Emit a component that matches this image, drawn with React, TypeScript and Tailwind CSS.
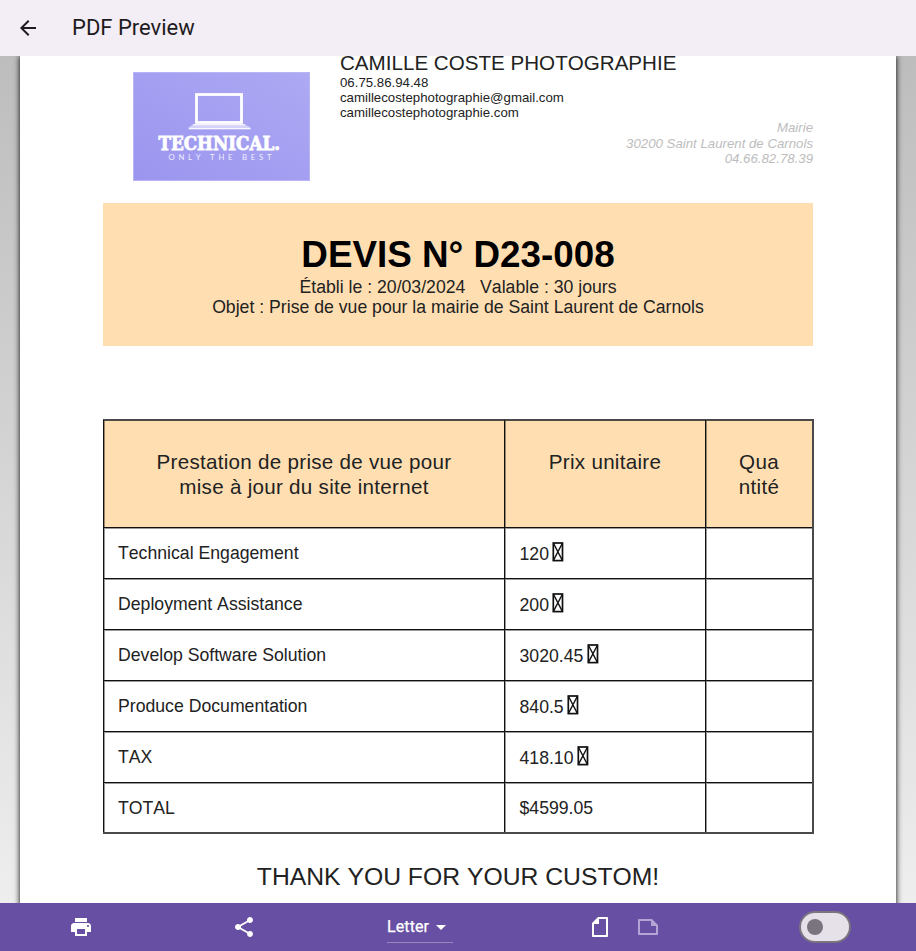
import React from 'react';
import { MdArrowBack, MdArrowDropDown, MdPrint, MdShare } from 'react-icons/md';

const rows = [
  { label: 'Technical Engagement', price: '120', missing: true, h: 'h-[51px]' },
  { label: 'Deployment Assistance', price: '200', missing: true, h: 'h-[51px]' },
  { label: 'Develop Software Solution', price: '3020.45', missing: true, h: 'h-[51px]' },
  { label: 'Produce Documentation', price: '840.5', missing: true, h: 'h-[51px]' },
  { label: 'TAX', price: '418.10', missing: true, h: 'h-[51px]' },
  { label: 'TOTAL', price: '$4599.05', missing: false, h: 'h-[50px]' },
];

const columns = 'grid grid-cols-[401px_201px_107px]';
const cell = 'border-l border-t border-[#111] shadow-[inset_1px_1px_0_rgba(0,0,0,0.4)]';
const headCell = 'border-l border-l-[#111] border-t-2 border-t-[#4a4a48] pt-[28px] shadow-[inset_1px_0_0_rgba(0,0,0,0.4)]';

function MissingGlyph() {
  return (
    <svg className="ml-[3.5px] -mt-[3px] shrink-0" width="12" height="20" viewBox="0 0 12 20" fill="none" stroke="#111">
      <rect x="1.3" y="1" width="9.2" height="17.6" strokeWidth="1.7" />
      <path d="M1.3 1l9.2 17.6M10.5 1L1.3 18.6" strokeWidth="1.4" />
    </svg>
  );
}

function NoteIcon({ className }: { className: string }) {
  return (
    <svg className={className} width="24" height="24" viewBox="0 0 24 24" fill="currentColor">
      <path d="M16 4H3c-.6 0-1 .4-1 1v14c0 .6.4 1 1 1h18c.6 0 1-.4 1-1v-9l-6-6zM4 18V6h11v5h5v7H4z" />
    </svg>
  );
}

function Logo() {
  return (
    <div className="h-[109px] w-[177px] bg-linear-to-tr from-[#9b95ef] to-[#ada9f3] outline-1 -outline-offset-1 outline-[#b8b4f5]">
      <svg width="177" height="109" viewBox="0 0 177 109">
        <rect x="63.5" y="22.5" width="45" height="28" fill="none" stroke="#fff" strokeWidth="2.8" />
        <path d="M60 52.5h52l5.5 3v1.8h-62v-1.8z" fill="#d5d2fa" />
        <path d="M60 52.7h52M56 56.7h61.5" stroke="#fff" strokeWidth="1" />
        <text x="25.5" y="78.2" textLength="121.5" lengthAdjust="spacingAndGlyphs" fill="#fff" stroke="#fff" strokeWidth="0.8" fontSize="17.8" fontWeight="700" fontFamily="'DejaVu Serif', serif">TECHNICAL.</text>
        <text x="35.5" y="88.2" textLength="103" fill="#f0effd" fontSize="7.8" fontFamily="Lato, sans-serif">ONLY THE BEST</text>
      </svg>
    </div>
  );
}

export default function App() {
  return (
    <div className="flex h-[951px] w-[916px] flex-col overflow-hidden">
      <header className="z-10 flex h-14 shrink-0 items-center bg-[#f3edf5] px-4 text-[#1d1b20]">
        <MdArrowBack size={24} />
        <h1 className="ml-8 font-[Roboto,sans-serif] text-[22px] leading-7">PDF Preview</h1>
      </header>

      <main className="flex-1 overflow-hidden bg-linear-to-b from-[#bdbdbd] to-[#eeeeee] px-5">
        <article className="h-[860px] bg-white px-[83px] font-['Liberation_Sans',Arial,sans-serif] text-[#222] shadow-[0_0_6px_0_#000] [font-kerning:none]">
          <section className="flex h-[147px]">
            <div className="ml-[30px] mt-4">
              <Logo />
            </div>
            <div className="-mt-[5px] ml-[30px] whitespace-nowrap text-[13.24px] leading-[15.2px]">
              <div className="text-[20.6px] leading-[23.5px]">CAMILLE COSTE PHOTOGRAPHIE</div>
              <div>06.75.86.94.48</div>
              <div>camillecostephotographie@gmail.com</div>
              <div>camillecostephotographie.com</div>
            </div>
            <div className="ml-auto mt-[64px] w-0">
              <div className="float-right whitespace-nowrap text-right text-[13.24px] italic leading-[15px] text-[#bdbdbd]">
                <div>Mairie</div>
                <div className="mt-px">30200 Saint Laurent de Carnols</div>
                <div>04.66.82.78.39</div>
              </div>
            </div>
          </section>

          <section className="h-[143px] bg-[#ffdfb2] pt-[31px] text-center text-[17.66px] leading-5">
            <h2 className="text-[36.8px] font-bold leading-[42px] text-black">DEVIS N° D23-008</h2>
            <div className="mt-px whitespace-pre">Établi le : 20/03/2024   Valable : 30 jours</div>
            <div>Objet : Prise de vue pour la mairie de Saint Laurent de Carnols</div>
          </section>

          <section className="mt-[73px] w-[711px] border-b-2 border-r-2 border-[#4a4a4a] text-[17.66px]">
            <div className={`${columns} h-[108px] bg-[#ffdfb2] text-center text-[20.6px] leading-[25px] tracking-[0.28px]`}>
              <div className={headCell}>Prestation de prise de vue pour<br />mise à jour du site internet</div>
              <div className={headCell}>Prix unitaire</div>
              <div className={headCell}>Qua<br />ntité</div>
            </div>
            {rows.map((row) => (
              <div key={row.label} className={`${columns} ${row.h}`}>
                <div className={`${cell} pl-[14px] pt-[15px] leading-5`}>{row.label}</div>
                <div className={`${cell} flex items-center pl-[14.5px] pt-[1px] leading-5`}>
                  {row.price}
                  {row.missing && <MissingGlyph />}
                </div>
                <div className={cell} />
              </div>
            ))}
          </section>

          <div className="mt-[28px] text-center text-[24.72px] leading-[30px]">THANK YOU FOR YOUR CUSTOM!</div>
        </article>
      </main>

      <footer className="z-10 flex h-12 shrink-0 items-center bg-[#6750a4] text-white">
        <MdPrint size={24} className="ml-[69px]" />
        <MdShare size={24} className="ml-[139px]" />
        <div className="ml-[131px] flex h-8 w-[66px] items-center border-b border-[#9a85bd] font-[Roboto,sans-serif] text-base font-normal tracking-[0.1px] [-webkit-text-stroke:0.25px_white]">
          <span className="w-[42px]">Letter</span>
          <MdArrowDropDown size={24} className="shrink-0" />
        </div>
        <NoteIcon className="ml-[135px] -rotate-90" />
        <NoteIcon className="ml-6 text-[#b3a4d6]" />
        <div className="ml-[138.5px] flex h-8 w-[52px] items-center rounded-full border-2 border-[#79747e] bg-[#e6e0e9] pl-[6px]">
          <div className="size-4 rounded-full bg-[#79747e]" />
        </div>
      </footer>
    </div>
  );
}
